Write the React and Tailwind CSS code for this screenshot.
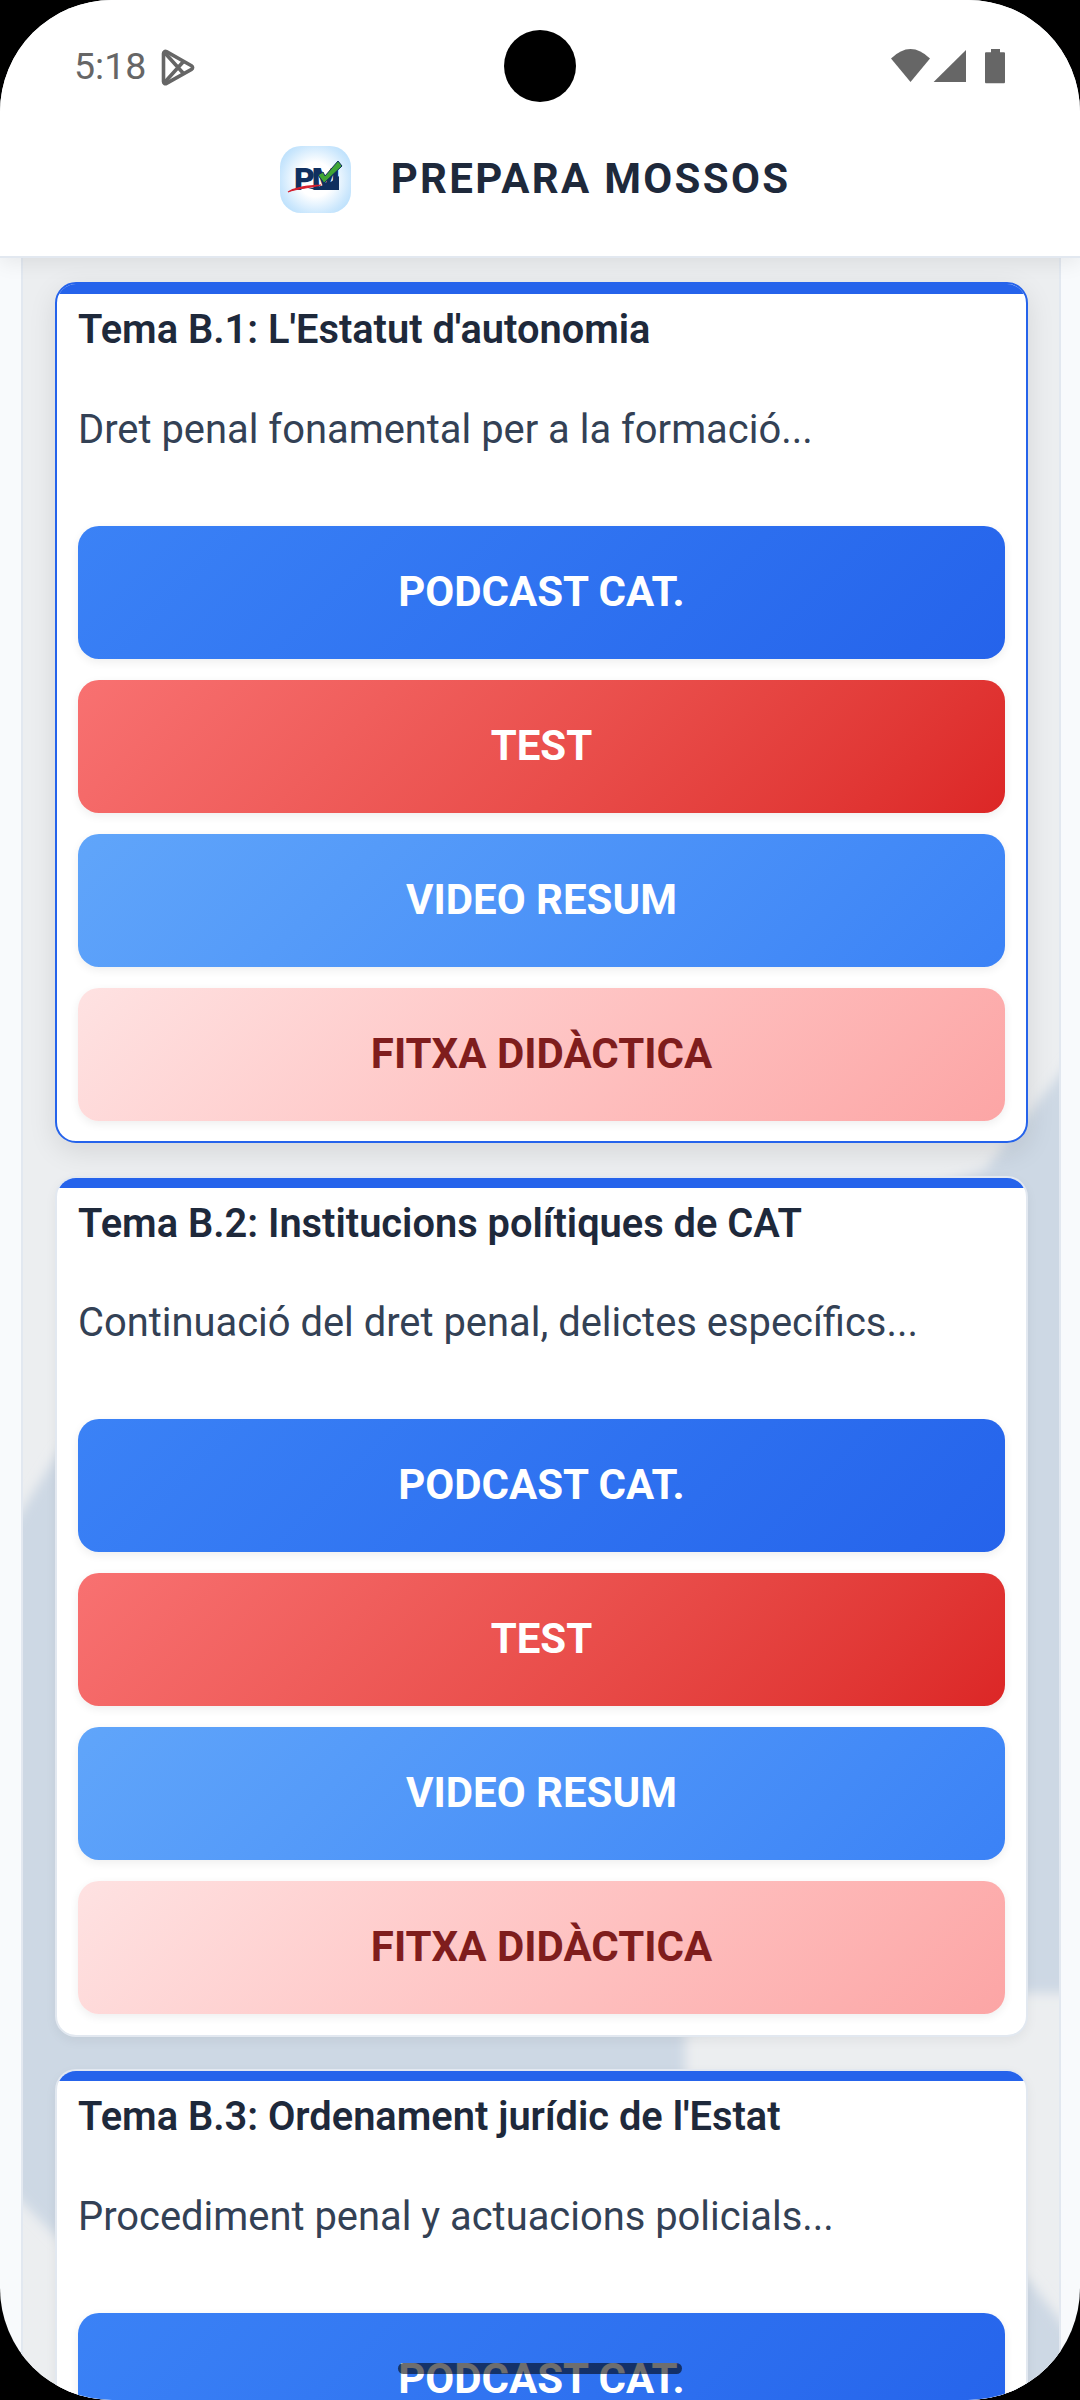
const font = { fontFamily: "Roboto, 'Liberation Sans', sans-serif" };

const buttons = [
  { label: "PODCAST CAT.", cls: "from-[#3b82f6] to-[#2563eb] text-white" },
  { label: "TEST", cls: "from-[#f87171] to-[#dc2626] text-white" },
  { label: "VIDEO RESUM", cls: "from-[#60a5fa] to-[#3b82f6] text-white" },
  { label: "FITXA DIDÀCTICA", cls: "from-[#fee2e2] to-[#fca5a5] text-[#7f1d1d]" },
];

const temes = [
  { title: "Tema B.1: L'Estatut d'autonomia", desc: "Dret penal fonamental per a la formació...", active: true },
  { title: "Tema B.2: Institucions polítiques de CAT", desc: "Continuació del dret penal, delictes específics..." },
  { title: "Tema B.3: Ordenament jurídic de l'Estat", desc: "Procediment penal y actuacions policials..." },
];

function PlayIcon() {
  return (
    <svg width="34" height="37" viewBox="0 0 34 37" fill="none" stroke="#666" strokeWidth="3.6" strokeLinejoin="round">
      <path d="M2.5 4.5c0-1.6 1.5-2.6 3-1.8l25 14c1.5.9 1.5 2.9 0 3.7l-25 14c-1.5.8-3-.2-3-1.8z" />
      <path d="M3.5 3.5 22.5 24.5M3.5 33.5 22.5 12.5" />
    </svg>
  );
}

function StatusIcons() {
  return (
    <svg width="114" height="35" viewBox="0 0 114 35" fill="#666">
      <path d="M0 9.5Q19.5-9.5 39 9.5L19.5 33z" />
      <path d="M75 1V33H42.6z" />
      <path d="M94 4.5c0-.8.5-1.3 1.3-1.3H100V0h9v3.2h3.7c.8 0 1.3.5 1.3 1.3V33c0 .8-.5 1.3-1.3 1.3H95.3c-.8 0-1.3-.5-1.3-1.3z" />
    </svg>
  );
}

function Logo() {
  return (
    <div className="w-[71px] h-[67px] mt-[3px] rounded-[21px] bg-[radial-gradient(circle_at_50%_50%,#ffffff_35%,#cde8fd_70%,#a9d8fb_100%)]">
      <svg width="71" height="67" viewBox="0 0 71 67">
        <text x="14" y="44" fontFamily="Roboto, sans-serif" fontWeight="900" fontSize="32" letterSpacing="-3" fill="#10305f">PM</text>
        <path d="M28 42C38 42 50 38 59 30L59 44H40C36 44 32 43 28 42z" fill="#10305f" />
        <path d="M8 46C18 40 30 40 41 39 30 42 18 42 8 46z" fill="#d4202f" stroke="#d4202f" strokeWidth="1.2" />
        <path d="M38 29 43 26 45 30 58 15 62 20 44 37z" fill="#3fa535" stroke="#10305f" strokeWidth="1" />
      </svg>
    </div>
  );
}

function Header() {
  return (
    <header className="relative z-10 h-[258px] shrink-0 bg-white border-b-2 border-[#e2e8f0] shadow-[0_4px_20px_rgba(0,0,0,0.08)]">
      <div className="h-[134px] pl-[74px] pr-[75px] pt-[49px] flex items-start justify-between">
        <div className="flex items-start gap-[15px] h-[42px]">
          <span className="-mt-[1px] text-[37.5px] leading-[36px] text-[#666]">5:18</span>
          <PlayIcon />
        </div>
        <StatusIcons />
      </div>
      <div className="flex items-center justify-center gap-[40px] h-[88px] pr-[10px]">
        <Logo />
        <h1 className="mt-[1px] text-[42px] leading-[52px] font-bold tracking-[0.055em] text-[#1e293b]">PREPARA MOSSOS</h1>
      </div>
    </header>
  );
}

function Card({ title, desc, active }) {
  return (
    <article
      className={`relative w-[973px] h-[861px] shrink-0 rounded-[21px] overflow-hidden bg-white border-2 px-[21px] ${
        active ? "border-[#2563eb] shadow-[0_8px_28px_rgba(0,0,0,0.1)]" : "border-[#e2e8f0] shadow-[0_4px_12px_rgba(0,0,0,0.05)]"
      }`}
    >
      <div className="absolute inset-x-0 top-0 h-[10px] bg-[#2563eb]" />
      <h2 className="pt-[20px] text-[39.8px] leading-[52px] font-semibold text-[#1e293b]">{title}</h2>
      <p className="mt-[47.5px] text-[39.9px] leading-[52px] text-[#334155]">{desc}</p>
      <div className="mt-[70px] flex flex-col gap-[21px]">
        {buttons.map((b) => (
          <div
            key={b.label}
            className={`h-[133px] shrink-0 rounded-[21px] bg-linear-135 ${b.cls} flex items-center justify-center pb-[2px] text-[42px] font-bold shadow-[0_3px_10px_rgba(0,0,0,0.07)]`}
          >
            {b.label}
          </div>
        ))}
      </div>
    </article>
  );
}

function Backdrop() {
  return (
    <svg className="absolute inset-0" width="1036" height="2142" viewBox="0 0 1036 2142" aria-hidden="true">
      <defs>
        <filter id="soft" x="-5%" y="-5%" width="110%" height="110%"><feGaussianBlur stdDeviation="6" /></filter>
      </defs>
      <g transform="translate(-23 -258)" fill="#cdd8e4" filter="url(#soft)">
        <path d="M1075 1055 985 1170 60 1450 10 1530 10 2190 60 2240 685 2240 685 2030 1020 1993 1075 1993z" />
        <path d="M1026 2277 1075 2340 1075 2420 1000 2420 1000 2277z" />
      </g>
    </svg>
  );
}

export default function App() {
  return (
    <div className="h-[2400px] w-[1080px] bg-black overflow-hidden" style={font}>
      <div className="relative h-full w-full rounded-[112px] overflow-hidden bg-[#f8fafc] flex flex-col">
        <Header />
        <main className="flex-1 min-h-0 w-[1040px] ml-[21px] border-x-2 border-[#e2e8f0] bg-[#eceef0] relative overflow-hidden">
          <Backdrop />
          <div className="relative pl-[32px] pt-[24px] flex flex-col gap-[32.5px]">
            {temes.map((t) => (
              <Card key={t.title} {...t} />
            ))}
          </div>
        </main>
        <div className="absolute left-[504px] top-[30px] w-[72px] h-[72px] rounded-full bg-black z-20" />
        <div className="absolute left-[398px] top-[2363px] w-[284px] h-[11px] rounded-full bg-black/57 z-20" />
      </div>
    </div>
  );
}
